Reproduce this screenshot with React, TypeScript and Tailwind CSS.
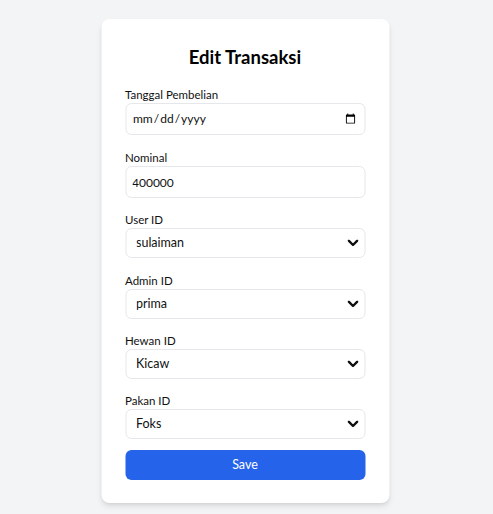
import React, { useState } from 'react';

const Chevron = () => (
  <svg
    className="pointer-events-none absolute right-[7px] top-1/2 -translate-y-1/2"
    width="11"
    height="7"
    viewBox="0 0 11 7"
    fill="none"
  >
    <path d="M1.2 1.2 5.5 5.5 9.8 1.2" stroke="#111" strokeWidth="2.4" strokeLinecap="round" strokeLinejoin="round" />
  </svg>
);

const SelectField = ({
  label,
  value,
  options,
  onChange,
  gap,
}: {
  label: string;
  value: string;
  options: string[];
  onChange: (v: string) => void;
  gap: string;
}) => (
  <div className={gap}>
    <label className="block text-[11.5px] leading-4 text-[#111]">{label}</label>
    <div className="relative">
      <select
        value={value}
        onChange={(e) => onChange(e.target.value)}
        className="block h-[30px] w-full appearance-none rounded-md border border-[#e5e7eb] bg-white pl-[10px] pr-6 text-[12.5px] text-[#111] outline-none"
      >
        {options.map((o) => (
          <option key={o} value={o}>
            {o}
          </option>
        ))}
      </select>
      <Chevron />
    </div>
  </div>
);

export default function App() {
  const [tanggal, setTanggal] = useState('');
  const [nominal, setNominal] = useState('400000');
  const [userId, setUserId] = useState('sulaiman');
  const [adminId, setAdminId] = useState('prima');
  const [hewanId, setHewanId] = useState('Kicaw');
  const [pakanId, setPakanId] = useState('Foks');

  return (
    <div className="min-h-screen bg-[#f3f4f6] pt-[19px] font-['Lato',sans-serif]">
      {/* card */}
      <div className="mx-auto w-[288px] -translate-x-[1.5px] rounded-lg bg-white px-6 pb-[23px] pt-6 shadow-md">
        <h1 className="mb-[16px] text-center text-[18.5px] font-bold leading-7 text-black">Edit Transaksi</h1>

        {/* tanggal */}
        <div className="mb-[15px]">
          <label className="block text-[11.5px] leading-4 text-[#111]">Tanggal Pembelian</label>
          <input
            type="date"
            value={tanggal}
            onChange={(e) => setTanggal(e.target.value)}
            className="block h-8 w-full rounded-md border border-[#e5e7eb] bg-white px-[6px] text-[12px] text-[#111] outline-none"
          />
        </div>

        {/* nominal */}
        <div className="mb-[14px]">
          <label className="block text-[11.5px] leading-4 text-[#111]">Nominal</label>
          <input
            type="text"
            value={nominal}
            onChange={(e) => setNominal(e.target.value)}
            className="block h-8 w-full rounded-md border border-[#e5e7eb] bg-white px-[6px] text-[12px] text-[#111] outline-none"
          />
        </div>

        <SelectField label="User ID" value={userId} options={['sulaiman']} onChange={setUserId} gap="mb-[15px]" />
        <SelectField label="Admin ID" value={adminId} options={['prima']} onChange={setAdminId} gap="mb-[14px]" />
        <SelectField label="Hewan ID" value={hewanId} options={['Kicaw']} onChange={setHewanId} gap="mb-[14px]" />
        <SelectField label="Pakan ID" value={pakanId} options={['Foks']} onChange={setPakanId} gap="mb-[11px]" />

        <button className="block h-[30px] w-full rounded-md bg-[#2563eb] text-[12.5px] text-white">Save</button>
      </div>
    </div>
  );
}
